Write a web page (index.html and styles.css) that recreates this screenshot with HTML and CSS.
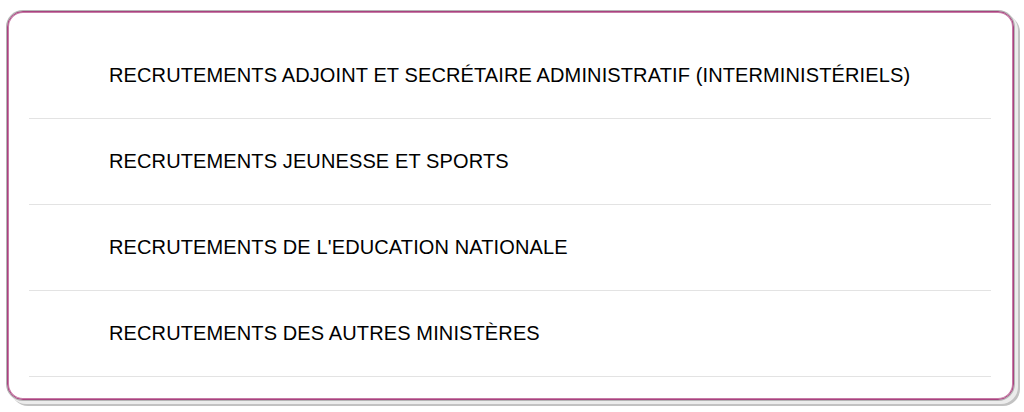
FILE: index.html
```html
<!DOCTYPE html>
<html lang="fr">
<head>
<meta charset="UTF-8" />
<meta name="viewport" content="width=device-width, initial-scale=1" />
<title>Recrutements</title>
<link rel="stylesheet" href="styles.css">
</head>
<body>

<div class="panel">
  <ul class="menu">
    <li class="menu-item"><a href="#">RECRUTEMENTS ADJOINT ET SECRÉTAIRE ADMINISTRATIF (INTERMINISTÉRIELS)</a></li>
    <li class="menu-item"><a href="#">RECRUTEMENTS JEUNESSE ET SPORTS</a></li>
    <li class="menu-item"><a href="#">RECRUTEMENTS DE L'EDUCATION NATIONALE</a></li>
    <li class="menu-item"><a href="#">RECRUTEMENTS DES AUTRES MINISTÈRES</a></li>
  </ul>
</div>

</body>
</html>
```

FILE: styles.css
```css
* {
  box-sizing: border-box;
}
html, body {
  min-height: 412px;
}
body {
  margin: 0;
  padding: 11px 10px 12px 7px;
  background: #fff;
  font-family: "Liberation Sans", Arial, sans-serif;
  color: #000;
}

/* Rounded panel with a thin purple rim and grey drop shadow */
.panel {
  height: 389px;
  border: 1px solid #a8437f;
  border-radius: 16px;
  background: #fff;
  padding: 21px 22px 22px 21px;
  box-shadow:
    inset 0 0 0 1px #c77aa6,
    0 0 0 1px #b5b5b5,
    3px 3px 0 1px #ececec,
    5px 5px 0 1px #c2c2c2;
}

.menu {
  list-style: none;
  margin: 0;
  padding: 0;
}
.menu-item {
  height: 86px;
  border-bottom: 1px solid #e3e3e3;
  display: flex;
  align-items: center;
  padding-left: 80px;
}
.menu-item a {
  color: #000;
  text-decoration: none;
  font-size: 20px;
  letter-spacing: 0.12px;
}
```
